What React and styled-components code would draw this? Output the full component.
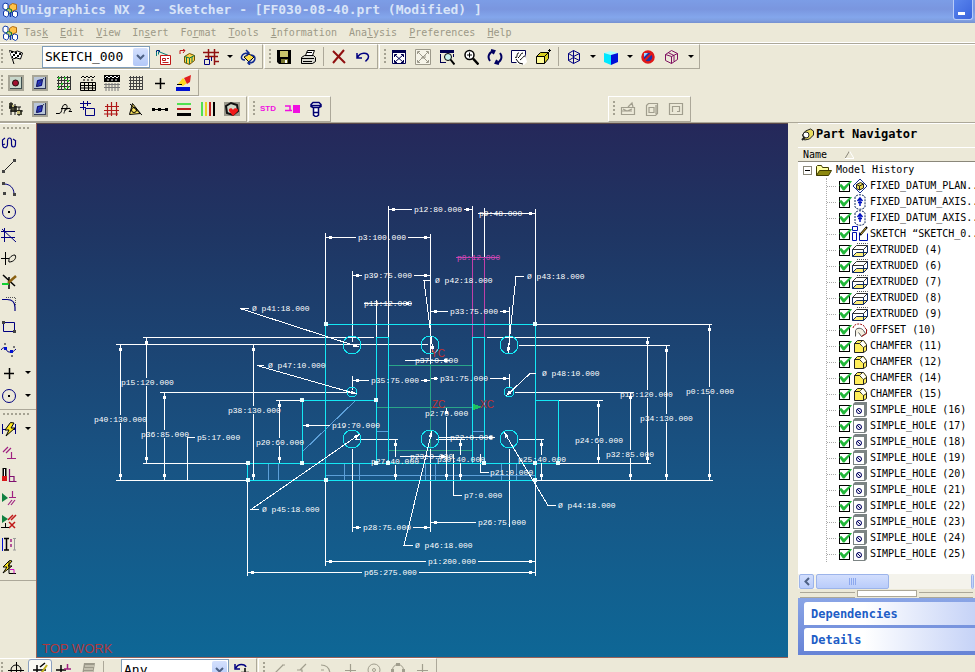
import { Fragment } from "react";
import styled, { createGlobalStyle, css } from "styled-components";

const GlobalStyle = createGlobalStyle`
  :root {
    --face: #ece9d8;
    --shadow: #aca899;
    --light: #ffffff;
    --font-ui: "DejaVu Sans Mono", "Liberation Mono", monospace;
  }

  * {
    box-sizing: border-box;
  }

  body {
    margin: 0;
    overflow: hidden;
    background: var(--face);
    font-family: var(--font-ui);
    font-size: 10px;
    color: #000;
  }
`;

/* ---------- icons, all on a 16 x 16 grid ---------- */

const stroke = (d, color = "#000", width = 1, fill = "none") => (
  <path d={d} stroke={color} strokeWidth={width} fill={fill} />
);

const fill = (d, color = "#000") => <path d={d} fill={color} />;

const grid = (color) =>
  stroke(
    "M2.5 1v14M5.5 1v14M8.5 1v14M11.5 1v14M14.5 1v14M1 2.5h14M1 5.5h14M1 8.5h14M1 11.5h14M1 14.5h14",
    color
  );

const art = {
  app: (
    <>
      {stroke("M1 2.500l2-1.500 3 1v4l-2 2-3-1.500z", "#123aa8", 1, "#fff")}
      {stroke("M7.500 3.500l3-2 4 1v5l-4 1.500-3-2z", "#b06a10", 1, "#ffc24a")}
      {stroke("M4.500 7.500l2-1 3 1v3l-2 1-3-1z", "#0b7a2e", 1, "#b8c86c")}
      {stroke("M10.500 10l2-1 3 1v4l-2 1.500-3-1.500z", "#123aa8", 1, "#fff")}
      {stroke("M1.500 9.500l2-1 3 1v4l-2 1.500-3-1.500z", "#123aa8", 1, "#fff")}
      {stroke("M8.500 10v5", "#123aa8", 1.500)}
    </>
  ),
  flag: (
    <>
      {stroke("M1.500 1.500L6 15", "#000")}
      {stroke("M1.500 1.500l5 1.500 3-1 5 2-2 6-4-1-4 1", "#000", 1, "#fff")}
      {fill("M3 2h2v2H3zM7 3h2v2H7zM11 4h2v2h-2zM5 5h2v2H5zM9 6h2v2H9zM4 7h1v2H4zM7 8h2v1H7z")}
    </>
  ),
  sketchView: (
    <>
      {stroke("M1.500 7V1.500H5M3.500 5.500V2.500l10 4", "#0a7a7a")}
      {stroke("M5.500 6.500h10v9h-10z", "#c01818", 1, "#fff")}
      {stroke("M7.500 9.500h3v2h-3zM12 9.500h2M7.500 13.500h6", "#c01818")}
      {stroke("M1 3l2-2 2 2", "#000080")}
    </>
  ),
  orient: (
    <>
      {stroke("M1 5V1.500h5M4 0l2 1.500L4 4", "#c01818")}
      {stroke("M5.500 7.500l5-3 5 2v5l-5 4-5-2z", "#705000", 1, "#ffd24a")}
      {stroke("M5.500 7.500l5 1.500 5-2.500M10.500 9v6M7.500 8v6M13 8v5", "#0a7a4a")}
    </>
  ),
  reattach: (
    <>
      {stroke("M0 3.500h16M5.500 0v10M11.500 0v16M2 7.500h13M12 12.500h4", "#901010", 1.500)}
      {stroke("M1.500 10.500h5v5h-5zM8.500 8v4", "#000080")}
    </>
  ),
  update: (
    <>
      {stroke("M4 8l5-3 5 3-5 5z", "#000", 1, "#ffe04a")}
      {stroke("M5 11C-1 11 1 4 8 4M6 1l3 3-3 3M11 6c6 0 5 8-2 8M11 11l-3 3 2 2", "#102a90", 1.500)}
    </>
  ),
  save: (
    <>
      {fill("M1 1h14v14H3l-2-2z")}
      {fill("M4 2h8v6H4z", "#c9c46a")}
      {fill("M5 10h7v4H5z", "#7c7a34")}
      {fill("M9 11h2v3H9z", "#fff")}
    </>
  ),
  print: (
    <>
      {stroke("M5.500 6.500l2-5h7l-2 5", "#000", 1, "#fff")}
      {stroke("M1.500 8.500l3-2h9l2 2v4l-3 2h-11z", "#000", 1, "#d8d8d0")}
      {stroke("M2 9.500h12M3 12.500h9M7 3.500h5", "#000")}
    </>
  ),
  remove: stroke("M2 2l12 12M13 1L2 14", "#901010", 2),
  undo: stroke("M2 4v5h5M2.500 8.500C5 3 13 3 13.500 7.500c0 3-2 3-3 5", "#000080", 1.500),
  fit: (
    <>
      {stroke("M1.500 2.500h13v12h-13z", "#000050", 1, "#fff")}
      {fill("M1 1h14v3H1z", "#000050")}
      {stroke("M4 6l8 7M12 6l-8 7M3.500 8V5.500H6M10 5.500h2.500V8M3.500 11v2.500H6M10 13.500h2.500V11", "#000050")}
    </>
  ),
  fitSelection: (
    <>
      {stroke("M.500 .500h15v15H.500z", "#9c998a", 1, "#f6f4e8")}
      {stroke("M3 3l10 10M13 3L3 13M2.500 5V2.500H5M11 2.500h2.500V5M2.500 11v2.500H5M11 13.500h2.500V11M6 9h4V6", "#9c998a")}
    </>
  ),
  zoomArea: (
    <>
      {fill("M1 1h14v3H1z", "#000050")}
      {stroke("M1.500 5v8M14.500 5v3M1 13.500h6", "#000050", 1)}
      <circle cx="9" cy="8" r="3.500" fill="#c9f2ee" stroke="#000" />
      {stroke("M11.500 10.500l4 5", "#000", 2)}
    </>
  ),
  zoom: (
    <>
      <circle cx="6.500" cy="6" r="4.500" fill="#fff" stroke="#000" strokeWidth="1.500" />
      {stroke("M4 6h5M6.500 3.500v5", "#000")}
      {stroke("M10 9.500l5.500 6", "#000", 2.500)}
    </>
  ),
  rotate: stroke("M3 12C0 8 2 3 7 2M4 1l3.500 1L6 5M13 4c3 4 1 9-4 10M12 15l-3.500-1L10 11", "#000060", 2),
  pan: (
    <>
      {stroke("M.500 1.500h14v12H.500z", "#000050", 1, "#fff")}
      {fill("M6 15L4 9l3 2 7-6 2 8-3 3z", "#fff")}
      {stroke("M4 8c3 3 1-5 4-4M7 9c3-2 2-5 5-5M9 11c3-2 3-4 5-4M5 10l3 4 4 1", "#000")}
    </>
  ),
  perspective: (
    <>
      {stroke("M1.500 7.500l4-4h8l-4 4zM9.500 7.500l4-4v6l-4 5z", "#000", 1, "#d8d020")}
      {stroke("M1.500 7.500h8v7h-8z", "#000", 1, "#fffb96")}
      {stroke("M13 1.500h3M14.500 0v3")}
    </>
  ),
  wire: stroke("M2.500 4.500l5-3 6 3v7l-6 3-5-3zM2.500 4.500l5 3 6-3M7.500 1.500v13M2.500 11.500l5-3 6 3", "#000080"),
  shaded: (
    <>
      {fill("M1 4l6-2 8 2-6 2z", "#a8ffff")}
      {fill("M1 4l7 2v10l-7-3z", "#00e8ff")}
      {fill("M8 6l7-2v9l-7 3z", "#0010d8")}
    </>
  ),
  noHide: (
    <>
      <circle cx="8" cy="8" r="5.500" fill="#2030a8" stroke="#e01818" strokeWidth="2.500" />
      {fill("M4 4h4L4 8z", "#9ad6ff")}
      {stroke("M4 12l8-8", "#e01818", 2)}
    </>
  ),
  wirePurple: stroke("M1.500 5.500l6-4 6 3v6l-6 4-6-3zM1.500 5.500l6 2 6-3M7.500 7.500v7M4 3.500l6 3v6", "#801060"),
  constraintA: (
    <>
      {fill("M0 0h16v16H0z", "#a7a596")}
      {fill("M2 2h11v11H2z", "#c9d8cc")}
      <circle cx="7.500" cy="8" r="3" fill="#a01030" stroke="#201010" />
      {stroke("M13.500 2v12M2 13.500h12", "#405050")}
    </>
  ),
  constraintB: (
    <>
      {fill("M0 0h16v16H0z", "#a7a596")}
      {fill("M2 2h11v11H2z", "#b9c6d8")}
      {stroke("M4.500 11.500l1-6 5-1-1 6z", "#000070", 1, "#2838c8")}
      {stroke("M4 12l8-9M13.500 2v12M2 13.500h12", "#303858")}
    </>
  ),
  gridGreen: (
    <>
      {grid("#333")}
      {fill("M2 2h2v2H2zM8 2h2v2H8zM11 5h2v2h-2zM5 8h2v2H5zM2 11h2v2H2zM11 11h2v2h-2zM8 13h2v2H8z", "#28b428")}
    </>
  ),
  pointsTable: (
    <>
      {stroke("M1 3l2-2 2 2 2-2 2 2 2-2 2 2 2-2M3 5h2M7 5h2M11 5h2", "#000", 1)}
      {stroke("M.500 7.500h15v8H.500zM0 10.500h16M0 13h16M4.500 7v9M8.500 7v9M12.500 7v9", "#000")}
    </>
  ),
  pointsDark: (
    <>
      {fill("M0 0h16v7H0z")}
      {stroke("M1 3l2-2 2 2 2-2 2 2 2-2 2 2 2-2M3 5h2M7 5h2M11 5h2", "#fff")}
      {stroke("M2 8v8M5 8v8M8 8v8M11 8v8M14 8v8M0 9.500h16M0 12.500h16", "#777")}
    </>
  ),
  grid: grid("#444"),
  plus: stroke("M3 8.500h10M8.500 3v11", "#000", 1.500),
  brush: (
    <>
      {fill("M0 12h14v4H0z", "#0010d0")}
      {fill("M2 9l5-6 4 5-4 3z", "#ffd820")}
      {fill("M8 3l7-3-1 7-3 2z", "#e02020")}
      {stroke("M1 9.500h5", "#000")}
    </>
  ),
  gears: (
    <>
      {fill("M1 2h4v3h4v4h5v5H9v-3H3V8H1z", "#4a4a38")}
      {stroke("M3 1v13M7 3v11M11 6v9M1 6h12M2 10h13", "#111")}
      {fill("M9 10h3v3H9zM4 4h2v2H4z", "#c0b878")}
    </>
  ),
  profile: stroke("M0 12.500h3c4 0 2-9 6-9 3 0 3 4-1 6M5 7.500h9M8 12.500c0-3 4-6 6-5 1 1 0 2-1 3h3"),
  rectGrid: stroke("M3.500 0v9M7.500 0v5M0 2.500h11M0 6.500h6M5.500 7.500h9v7h-9z", "#000080"),
  redGrid: stroke("M3.500 3v13M7.500 1v14M12.500 1v14M1 5.500h14M0 9.500h15M0 13h14", "#b01818", 1.200),
  cone: (
    <>
      {stroke("M1.500 13.500l3-11 8 10zM2 3l12 11", "#000", 1, "#ffe860")}
      <circle cx="6" cy="9" r="2.500" fill="none" stroke="#000" />
    </>
  ),
  dotted: (
    <>
      {stroke("M0 8.500h16")}
      {fill("M0 7h3v3H0zM6 7h3v3H6zM13 7h3v3h-3z")}
    </>
  ),
  hBars: (
    <>
      {fill("M1 2h14v2H1z", "#50e050")}
      {fill("M1 7h14v2H1z", "#c02020")}
      {fill("M1 12h14v3H1z", "#000")}
    </>
  ),
  vBars: (
    <>
      {fill("M1 1h2v14H1z", "#50e050")}
      {fill("M5 1h2v14H5z", "#e8d020")}
      {fill("M9 1h2v14H9z", "#c02020")}
      {fill("M13 1h2v14h-2z", "#000")}
    </>
  ),
  heart: (
    <>
      {fill("M0 1h16v14H0z", "#9c9a8c")}
      {stroke("M2 5l5-3 6 2 1 6-5 4-6-2z", "#111", 2, "#cfd8c8")}
      {fill("M9 15L5 10c-1-3 3-4 4-1 1-3 6-2 5 1z", "#f01818")}
    </>
  ),
  magentaBox: (
    <>
      {stroke("M1 5h5v4M1 9.500h7", "#f010e0", 1.500)}
      {fill("M9 4h7v8H9z", "#f010e0")}
    </>
  ),
  bolt: stroke("M5 1.500h6l2 2v2l-2 1H5l-2-1v-2zM3 4.500h10M5.500 7v7l2 1.500h1l2-1.500V7M5 11.500h6", "#000070", 1.500, "#fff"),
  openGray: stroke("M1.500 6.500h13v7h-13zM2 10h10M8 6l4-4 1 4M3 8l4 2 5-2", "#a19e8e", 1.200),
  boxGray: stroke("M2.500 4.500l2-2h9v10l-2 2h-9zM5 6.500h5v5H5zM12 4v9", "#a19e8e", 1.200),
  frameGray: stroke("M1.500 2.500h13v11h-13zM4.500 11V5.500h7v5H9", "#a19e8e", 1.200),
  sCurve: stroke("M4 3L1.500 5v4c0 5 5 5 5 0V6c0-4 4-4 4 0v3c0 4 4 4 4 0V6M4 9l-2.500 1M12 4l3 2", "#000080", 1.200),
  line: (
    <>
      {stroke("M3 13L13 3", "#222")}
      {fill("M1 12h3v3H1zM12 1h3v3h-3z", "#444")}
    </>
  ),
  arc: (
    <>
      {stroke("M3 3c6 0 10 4 10 10", "#000080")}
      {fill("M1 1h3v3H1zM12 12h3v3h-3zM2 11h3v3H2z", "#444")}
    </>
  ),
  circle: (
    <>
      <circle cx="8" cy="8" r="6.500" fill="none" stroke="#000080" />
      {fill("M7 7h2v2H7z")}
    </>
  ),
  trim: stroke("M3.500 1v14M0 4.500h14M0 10.500h14M1 2l14 13", "#000080"),
  extend: stroke("M4.500 2v13M0 8.500h8M8 12c-1-3 2-7 6-7 2 3-1 7-6 7z"),
  corner: (
    <>
      {stroke("M2 2l12 11M8 4v12", "#000", 1.500)}
      {stroke("M1 11h7", "#10d030", 2)}
      {stroke("M7 10l8-7", "#8a6010", 2.500)}
    </>
  ),
  fillet: (
    <>
      {stroke("M1 3.500h5c5 0 8 3 8 8V15", "#000080", 1.200)}
      <path d="M5 1.500h9.500V9" fill="none" stroke="#555" strokeDasharray="1 1" />
    </>
  ),
  rect: (
    <>
      {stroke("M2.500 3.500h11v9h-11z", "#000080")}
      {fill("M1 2h3v3H1zM12 11h3v3h-3z", "#444")}
    </>
  ),
  spline: (
    <>
      {stroke("M0 8c4-6 5 2 8 2s3 1 7-3", "#000080")}
      {fill("M3 5h3v3H3zM9 8h3v3H9z", "#0010d0")}
      {fill("M3 1h2v2H3zM12 4h2v2h-2zM10 13h2v2h-2z", "#777")}
    </>
  ),
  flashDim: (
    <>
      {stroke("M1.500 3v10M14.500 3v10M1 8.500h14", "#000080")}
      {stroke("M9.500 1.500L4 9h4l-3 6 9-8h-4l3-5z", "#000", 1, "#ffe820")}
    </>
  ),
  parallel: stroke("M2 8l5-5M5 9l5-5M6 14.500h9M10.500 8v6", "#a02080", 1.200),
  temp: (
    <>
      {stroke("M3.500 1v9", "#000", 4)}
      {stroke("M3.500 2v7", "#fff", 1)}
      {fill("M1 9h5v5H1z", "#d81818")}
      {stroke("M8.500 2v12.500h7M9 9.500h4v5", "#801070", 1.200)}
    </>
  ),
  playDim: (
    <>
      {fill("M1 3l6 5-6 4z", "#108040")}
      {stroke("M7 15l4-5M10 15l4-5M8 7.500h7M11.500 1v6", "#a02080", 1.200)}
    </>
  ),
  playRed: (
    <>
      {fill("M1 2l6 4-6 4z", "#108040")}
      {stroke("M7 7l5-5M10 7l5-5M8 9l6 6M14 9l-6 6", "#c01818", 1.500)}
      {stroke("M0 14.500h8M4.500 10v4")}
    </>
  ),
  mirror: (
    <>
      {stroke("M1.500 2v13", "#0010d0")}
      {stroke("M3 2.500h5M3 14h5M5.500 2v12", "#000", 1.500)}
      {stroke("M10 3v3M10 8v3", "#a02080", 1.500)}
      {stroke("M12 2.500h3M12 14h3M13.500 2v12", "#999")}
    </>
  ),
  flashCorner: (
    <>
      {stroke("M8.500 1.500L2 8h4l-4 6 9-7H7l4-5z", "#000", 1, "#ffe820")}
      {stroke("M8 2v12.500h7", "#000")}
      {stroke("M9 10.500h4v4", "#d010c0")}
    </>
  ),
  target: (
    <>
      <circle cx="8" cy="8" r="5" fill="none" stroke="#000" />
      {stroke("M8.500 0v16M0 8.500h16")}
    </>
  ),
  snap: (
    <>
      {stroke("M1 8h13M5 3v12M8 5l5-4", "#000", 1.500)}
      {stroke("M8 13l7-10", "#c0b020", 2)}
    </>
  ),
  snapPink: (
    <>
      {stroke("M0 8h10M5 3v12", "#000", 1.500)}
      {stroke("M8 7h7M11.500 2v5", "#a02080", 1.500)}
    </>
  ),
  stack: (
    <>
      {fill("M4 1h11l-2 12H2z", "#9c998a")}
      {stroke("M5 4h9M4 7h9M4 10h9", "#e8e4d2")}
    </>
  ),
  grayLine: stroke("M3 13L13 3M2 13h3M12 3h3", "#a19e8e", 1.200),
  grayTee: stroke("M12 2L6 8M3 8h5v6", "#a19e8e", 1.200),
  grayArc: stroke("M3 3c6 0 9 4 9 10M3 8h3", "#a19e8e", 1.200),
  grayPlus: stroke("M8.500 2v12M3 8.500h11", "#a19e8e", 1.200),
  grayCircle: (
    <g fill="none" stroke="#a19e8e">
      <circle cx="8" cy="8" r="6" />
      <circle cx="8" cy="8" r="1.500" />
    </g>
  ),
  grayRing: (
    <>
      <circle cx="8" cy="8" r="5.500" fill="none" stroke="#a19e8e" />
      {fill("M6 1h4v3H6zM1 7h3v3H1zM12 7h3v3h-3z", "#a19e8e")}
    </>
  ),
  undoDark: (
    <>
      {stroke("M1 2v5h5M2 6c2-5 9-4 10-1", "#000080", 1.500)}
      {stroke("M11 6v9M7 10.500h8", "#000", 1.500)}
    </>
  ),
  navigator: (
    <>
      {stroke("M2.500 9l3-4 5-2 3 2v4l-4 4-5 1z", "#222", 1, "#e8dc60")}
      <circle cx="6" cy="9" r="3" fill="#fff" stroke="#222" />
      {stroke("M2 14l3-3", "#222", 2)}
    </>
  ),
  folder: (
    <>
      {stroke("M.500 13.500v-9l1-1h4l1 2h6v3", "#403c00", 1, "#ffffa0")}
      {stroke("M.500 13.500l3-5h12l-3 5z", "#403c00", 1, "#8c8810")}
    </>
  ),
  plane: (
    <>
      {stroke("M1 8l7-7 7 7-7 7z", "#102a90", 1, "#fff")}
      {stroke("M4.500 6.500l4-2 3 1.500v4l-4 2-3-1.500z", "#222", 1, "#e8d850")}
      {stroke("M4.500 6.500l3 1.500 4-2M7.500 8v4", "#222")}
    </>
  ),
  axis: (
    <>
      <path d="M3 3v10c2 3 8 3 10 0V3C11 0 5 0 3 3z" fill="#fff" stroke="#102a60" strokeDasharray="2 1" />
      {stroke("M8 4v8M5.500 7L8 4l2.500 3M6 8.500h4", "#0010c0", 1.500)}
    </>
  ),
  sketch: (
    <>
      {stroke("M.500 .500h5v4h-5zM.500 6.500h4v8h-4zM7.500 6.500v8h8v-7", "#0010b0", 1, "#fff")}
      {stroke("M8 9l7-8", "#000", 2)}
      {stroke("M9 8l5-6", "#d8b030", 1)}
    </>
  ),
  extruded: (
    <>
      {stroke("M.500 7.500l4-4h11l-4 4z", "#333", 1, "#fff")}
      <path d="M5 1.500h10.500v6" fill="none" stroke="#555" strokeDasharray="1 1" />
      {stroke("M.500 14.500l4-4h11l-4 4z", "#102a60", 1, "#fff07a")}
      {stroke("M.500 7.500v7M11.500 7.500v7M15.500 3.500v7", "#102a60")}
    </>
  ),
  offset: (
    <>
      <path d="M1 6C2 1 9 1 12 4l3 5" fill="none" stroke="#a01818" strokeDasharray="2 1" />
      {stroke("M3.500 14.500v-6c1-3 6-3 8 0l2 3-4 3-3-4", "#555", 1, "#f4f0e0")}
      {stroke("M9.500 14.500l5-3V7", "#a01818")}
    </>
  ),
  chamfer: (
    <>
      {stroke("M2.500 14.500v-9l3-3h6l3 4v6l-3 2z", "#222", 1, "#ffee5a")}
      {stroke("M2.500 5.500h5l4 4v5M7.500 5.500l3-3M11.500 9.500l3-2", "#222", 1)}
      {fill("M8 5l3-2 3 4-3 2z", "#fff")}
    </>
  ),
  hole: (
    <>
      {fill("M1 2l2-2h12v13l-2 2H1z", "#7c8484")}
      {fill("M2 3h10v11H2z", "#fff")}
      <circle cx="7" cy="9" r="2.500" fill="#fff" stroke="#000060" />
      {stroke("M5 7l4 4", "#000060")}
    </>
  ),
};

const IconSvg = styled.svg`
  display: block;
  flex: none;
  width: 16px;
  height: 16px;
`;

function Icon({ name }) {
  return (
    <IconSvg viewBox="0 0 16 16" aria-hidden="true">
      {art[name]}
    </IconSvg>
  );
}

/* ---------- frame ---------- */

const Window = styled.div`
  display: flex;
  flex-direction: column;
  height: 100vh;
  background: var(--face);
`;

const TitleBar = styled.header`
  display: flex;
  flex: none;
  align-items: center;
  gap: 2px;
  height: 23px;
  padding: 0 2px 4px;
  background: linear-gradient(#7c9de6, #7a96df 40%, #83a6ec 75%, #7f9ee0 90%, #7590d0);
`;

const Title = styled.h1`
  flex: 1;
  margin: 0;
  font-size: 13px;
  font-weight: bold;
  line-height: 18px;
  white-space: pre;
  color: #d8e4f8;
`;

const MinimizeButton = styled.button`
  align-self: flex-start;
  display: flex;
  align-items: flex-end;
  width: 20px;
  height: 20px;
  padding: 0 0 4px 4px;
  border: 1px solid #b8ccf8;
  border-top: 0;
  border-radius: 0 0 3px 3px;
  background: linear-gradient(135deg, #5a86ee, #3a63dc);

  &::after {
    content: "";
    width: 7px;
    height: 3px;
    background: #fff;
  }
`;

const MenuBar = styled.nav`
  display: flex;
  flex: none;
  align-items: center;
  height: 21px;
  padding-left: 2px;
  border-bottom: 1px solid var(--shadow);
  box-shadow: 0 1px 0 var(--light), inset 0 -1px 0 var(--light);
`;

const MenuItem = styled.button`
  padding: 0 6px;
  border: 0;
  background: none;
  font: 10px/18px var(--font-ui);
  color: #9c9987;
`;

const menus = [
  ["Tas", "k", ""],
  ["", "E", "dit"],
  ["", "V", "iew"],
  ["In", "s", "ert"],
  ["Fo", "r", "mat"],
  ["", "T", "ools"],
  ["", "I", "nformation"],
  ["Ana", "l", "ysis"],
  ["", "P", "references"],
  ["", "H", "elp"],
];

/* ---------- toolbars ---------- */

const Toolbars = styled.div`
  flex: none;
  border-bottom: 1px solid var(--shadow);
`;

const ToolbarRow = styled.div`
  display: flex;
`;

const Toolbar = styled.div`
  display: flex;
  align-items: center;
  height: ${(p) => p.$height || 26}px;
  padding-right: 2px;
  padding-left: ${(p) => (p.$offset ? 3 : 0)}px;
  margin-left: ${(p) => p.$offset || 0}px;
  border-top: 1px solid var(--light);
  border-right: 1px solid var(--shadow);
  border-bottom: 1px solid var(--shadow);
  border-left: ${(p) => (p.$offset ? "1px solid var(--light)" : "0")};
`;

const Grip = styled.span`
  flex: none;
  width: 2px;
  height: 16px;
  margin: 0 1px;
  background: repeating-linear-gradient(#a5a292 0 2px, transparent 2px 4px);
`;

const toolButton = css`
  display: flex;
  align-items: center;
  justify-content: center;
  flex: none;
  padding: 0;
  border: 0;
  background: none;
`;

const ToolButton = styled.button`
  ${toolButton}
  width: 24px;
  height: 22px;

  &[aria-pressed="true"] {
    border: 1px solid #8aa0c0;
    border-radius: 3px;
    background: #fbfaf4;
  }
`;

const CaretButton = styled.button`
  ${toolButton}
  width: 13px;
  height: 22px;

  &::after {
    content: "";
    border: 3px solid transparent;
    border-top-color: #000;
    border-bottom: 0;
  }
`;

const Separator = styled.span`
  width: 1px;
  height: 19px;
  margin: 0 3px;
  background: var(--shadow);
`;

const StdLabel = styled.span`
  font: bold 8px/16px "Liberation Sans", sans-serif;
  color: #f010e0;
`;

const SelectBox = styled.div`
  position: relative;
  width: 108px;
  height: 22px;
  margin: 0 1px 0 14px;
`;

const Select = styled.select`
  appearance: none;
  width: 100%;
  height: 100%;
  padding: 0 20px 0 2px;
  border: 1px solid #7f9db9;
  border-radius: 0;
  background: #fff;
  font: 13px/18px var(--font-ui);
  color: #000;
`;

const SelectArrow = styled.span`
  position: absolute;
  top: 2px;
  right: 2px;
  bottom: 2px;
  display: flex;
  align-items: center;
  justify-content: center;
  width: 15px;
  border-radius: 2px;
  background: linear-gradient(#d4e0fd, #b2c8f8);
  pointer-events: none;
`;

function Combo({ label, value }) {
  return (
    <SelectBox>
      <Select aria-label={label} defaultValue={value}>
        <option>{value}</option>
      </Select>
      <SelectArrow>
        <svg width="9" height="6" viewBox="0 0 9 6" aria-hidden="true">
          {stroke("M1 1l3.500 3.500L8 1", "#4d6185", 2)}
        </svg>
      </SelectArrow>
    </SelectBox>
  );
}

function Tools({ names, pressed }) {
  return names.map((name, idx) => {
    if (name === "|") return <Separator key={idx} />;
    if (name === "v") return <CaretButton key={idx} aria-label="More options" />;
    return (
      <ToolButton key={idx} aria-label={name} aria-pressed={name === pressed}>
        <Icon name={name} />
      </ToolButton>
    );
  });
}

/* ---------- left palette ---------- */

const Workspace = styled.main`
  display: flex;
  flex: 1;
  min-height: 0;
`;

const Palette = styled.aside`
  flex: none;
  width: 36px;
  border-top: 1px solid var(--light);
`;

const PaletteGroup = styled.div`
  padding: 3px 0 2px;
  border-bottom: 1px solid var(--shadow);

  &::before {
    content: "";
    display: block;
    width: 27px;
    height: 2px;
    margin: 0 0 2px 3px;
    background: repeating-linear-gradient(90deg, #a5a292 0 2px, transparent 2px 4px);
  }
`;

const PaletteRow = styled.div`
  display: flex;
  align-items: center;
  height: 23px;
  padding-left: 1px;
`;

const PaletteButton = styled.button`
  ${toolButton}
  width: 16px;
  height: 22px;
  margin-right: 4px;
`;

const drawTools = [
  ["sCurve"],
  ["line"],
  ["arc"],
  ["circle"],
  ["trim"],
  ["extend"],
  ["corner"],
  ["fillet"],
  ["rect"],
  ["spline"],
  ["plus", true],
  ["circle", true],
];

const dimensionTools = [
  ["flashDim", true],
  ["parallel"],
  ["temp"],
  ["playDim"],
  ["playRed"],
  ["mirror"],
  ["flashCorner"],
];

function PaletteTools({ tools }) {
  return (
    <PaletteGroup>
      {tools.map(([name, more], idx) => (
        <PaletteRow key={idx}>
          <PaletteButton aria-label={name}>
            <Icon name={name} />
          </PaletteButton>
          {more && <CaretButton aria-label="More options" />}
        </PaletteRow>
      ))}
    </PaletteGroup>
  );
}

/* ---------- drawing ---------- */

const Viewport = styled.section`
  flex: 1;
  min-width: 0;
  border: 1px solid #9a6258;
  border-top-color: #5a4848;
  border-right: 0;
  background: linear-gradient(#25285a 0, #1f3563 20%, #185484 65%, #0e6796 100%);
`;

const Drawing = styled.svg`
  display: block;
  width: 100%;
  height: 100%;
  fill: none;
  shape-rendering: crispEdges;
`;

const DimText = styled.text`
  font: 8px "Liberation Mono", monospace;
  fill: ${(p) => p.$color || "#fff"};
  stroke: none;
  white-space: pre;
`;

const AxisText = styled.text`
  font: 10px "Liberation Sans", sans-serif;
  fill: #c03030;
`;

const ViewName = styled.text`
  font: 13px "Liberation Sans", sans-serif;
  fill: #b0383c;
`;

// horizontal dimensions: from, to, y, label, label x
const across = [
  [388, 472, 209, "p12:80.000", 414],
  [325, 430, 237, "p3:100.000", 358],
  [352, 430, 275, "p39:75.000", 364],
  [430, 509, 311, "p33:75.000", 450],
  [352, 430, 380, "p35:75.000", 371],
  [430, 509, 378, "p31:75.000", 440],
  [352, 430, 527, "p28:75.000", 363],
  [430, 509, 522, "p26:75.000", 478],
  [325, 535, 561, "p1:200.000", 428],
  [247, 535, 572, "p65:275.000", 364],
  [302, 376, 425, "p19:70.000", 332],
];

// vertical dimensions: x, from, to, label, label x, label y
const upright = [
  [146, 337, 463, "p15:120.000", 121, 382],
  [120, 344, 480, "p40:130.000", 94, 419],
  [164, 392, 480, "p36:85.000", 141, 434],
  [253, 344, 480, "p38:130.000", 228, 410],
  [279, 400, 463, "p20:60.000", 256, 442],
  [598, 400, 463, "p24:60.000", 575, 440],
  [630, 392, 480, "p32:85.000", 606, 454],
  [647, 337, 463, "p16:120.000", 620, 394],
  [666, 345, 480, "p34:130.000", 640, 418],
  [709, 324, 480, "p0:150.000", 686, 391],
  [446, 407, 480, "p2:70.000", 425, 413],
  [395, 439, 480, "p27:40.000", 371, 461],
  [460, 439, 480, "p30:40.000", 437, 459],
  [541, 439, 480, "p25:40.000", 518, 459],
];

// struck-through dimensions: line from, line to, y, label, label x
const struck = [
  [478, 535, 213, "p9:48.000", 479],
  [364, 412, 303, "p13:12.000", 364],
  [405, 450, 360, "p37:0.000", 415],
  [439, 495, 437, "p22:0.000", 450],
  [400, 447, 456, "p23:0.000", 410],
];

const notes = [
  ["\u00d8 p41:18.000", 252, 308],
  ["\u00d8 p42:18.000", 435, 280],
  ["\u00d8 p43:18.000", 527, 276],
  ["\u00d8 p47:10.000", 268, 365],
  ["\u00d8 p48:10.000", 542, 373],
  ["\u00d8 p45:18.000", 262, 509],
  ["\u00d8 p46:18.000", 415, 545],
  ["\u00d8 p44:18.000", 558, 505],
  ["p5:17.000", 197, 437],
  ["p7:0.000", 464, 495],
  ["p21:0.000", 490, 472],
];

const leaders = [
  "M249 308.500h-9L359 347",
  "M430 280.500h-6L433 352",
  "M524 276.500h-8L508 353",
  "M264 365.500h-7L357 394",
  "M536 373.500h-6L506 396",
  "M259 509.500h-8L360 434",
  "M413 545.500h-9L432 431",
  "M556 505.500h-8L504 432",
];

const extensions =
  "M388.500 206v131M472.500 206v51M484.500 208v49M535.500 209v115M325.500 233v91M430.500 234v130" +
  "M352.500 271v71M376.500 300v37M509.500 307v38M352.500 376v14M509.500 374v14" +
  "M143 337.500h231M487 337.500h163M116 344.500h312M519 345.500h151M535 324.500h177" +
  "M160 392.500h190M515 392.500h119M143 463.500h105M116 480.500h132M276 400.500h26" +
  "M558 400.500h45M558 463.500h93M535 480.500h178M355 439.500h43M436 439.500h29M519 439.500h25" +
  "M247.500 480v96M325.500 480v86M535.500 480v96M352.500 449v83M430.500 449v83M509.500 449v78" +
  "M195 437.500h-8v43M462 495.500h-9v-42M489 472.500h-9v-19";

const circles = [
  [352, 345, 9],
  [430, 345, 9],
  [509, 345, 9],
  [352, 439, 9],
  [430, 439, 9],
  [509, 439, 9],
  [352, 392, 5],
  [509, 392, 5],
];

const vertices = [
  [326, 324],
  [535, 324],
  [302, 400],
  [376, 400],
  [248, 463],
  [302, 463],
  [376, 463],
  [388, 463],
  [484, 463],
  [535, 463],
  [558, 463],
  [248, 480],
  [326, 480],
  [535, 480],
];

const CHAR = 5;

function DimAcross({ dim: [from, to, y, label, x] }) {
  const end = x + label.length * CHAR;
  return (
    <>
      <path d={`M${x - 2} ${y + 0.5}H${from + 1}`} markerEnd="url(#arrow)" />
      {end < to && <path d={`M${end} ${y + 0.5}H${to}`} markerEnd="url(#arrow)" />}
      <DimText x={x} y={y + 3}>
        {label}
      </DimText>
    </>
  );
}

function DimUpright({ dim: [at, from, to, label, x, y] }) {
  return (
    <>
      <path d={`M${at + 0.5} ${y - 4}V${from + 1}`} markerEnd="url(#arrow)" />
      <path d={`M${at + 0.5} ${y + 4}V${to}`} markerEnd="url(#arrow)" />
      <DimText x={x} y={y + 3}>
        {label}
      </DimText>
    </>
  );
}

function Sketch() {
  return (
    <Drawing role="img" aria-label="Sketch with dimensions">
      <defs>
        <marker id="arrow" markerUnits="userSpaceOnUse" markerWidth="7" markerHeight="5" refX="6" refY="2.500" orient="auto">
          <path d="M0 .500L6 2.500 0 4.500z" fill="#fff" />
        </marker>
      </defs>
      <g transform="translate(-37 -124)">
        <path
          stroke="#5c9fd8"
          d="M302 452l53-51M376 431.500h12M473 431.500h12M268.500 463v17M278.500 463v17M344.500 463v17M359.500 463v17M425.500 463v17M435.500 463v17M501.500 463v17M516.500 463v17M325 475.500h210"
        />
        <path stroke="#2aa588" d="M388 365.500h85M376 407.500h97M388 450.500h85M430.500 352v98" />
        <path stroke="#fff" d={extensions} />
        <path stroke="#c040a8" d="M472.500 257v80M484.500 257v80M456 257.500h43" />
        <g stroke="#14e8f4">
          <path d="M325.500 480V324.500h210V480.500H247.500V463.500h311V400.500h-23M302.500 463V400.500h74M376.500 463V337.500h12V463M472.500 463V337.500h12V463" />
          {circles.map(([cx, cy, r]) => (
            <circle key={`${cx}-${cy}`} cx={cx} cy={cy} r={r} />
          ))}
        </g>
        <g stroke="#fff">
          {leaders.map((d) => (
            <path key={d} d={d} markerEnd="url(#arrow)" />
          ))}
          {across.map((dim) => (
            <DimAcross key={dim[3]} dim={dim} />
          ))}
          {upright.map((dim) => (
            <DimUpright key={dim[3]} dim={dim} />
          ))}
          {struck.map(([from, to, y, label, x]) => (
            <Fragment key={label}>
              <path d={`M${from} ${y + 0.5}H${to}`} markerEnd="url(#arrow)" />
              <DimText x={x} y={y + 3}>
                {label}
              </DimText>
            </Fragment>
          ))}
        </g>
        {notes.map(([label, x, y]) => (
          <DimText key={label} x={x} y={y + 3}>
            {label}
          </DimText>
        ))}
        <DimText $color="#d84cbc" x="457" y="260">
          p8:12.000
        </DimText>
        {vertices.map(([x, y]) => (
          <path key={`${x}-${y}`} fill="#e8ffff" d={`M${x - 2} ${y - 2}h4v4h-4z`} />
        ))}
        <path fill="#20c060" d="M473 404l9 3-9 3z" />
        <AxisText x="431" y="357">YC</AxisText>
        <AxisText x="432" y="408">ZC</AxisText>
        <AxisText x="480" y="408">XC</AxisText>
        <ViewName x="42" y="653">TOP WORK</ViewName>
      </g>
    </Drawing>
  );
}

/* ---------- part navigator ---------- */

const Navigator = styled.aside`
  display: flex;
  flex-direction: column;
  flex: none;
  width: 177px;
  margin: 0 0 3px 10px;
  overflow: hidden;
`;

const NavigatorTitle = styled.h2`
  display: flex;
  flex: none;
  align-items: center;
  height: 24px;
  margin: 0;
  padding: 0 0 4px 2px;
  border-top: 1px solid var(--light);
  font-size: 12px;
  line-height: 18px;
`;

const ColumnHeader = styled.div`
  display: flex;
  flex: none;
  align-items: center;
  gap: 18px;
  height: 15px;
  padding-left: 5px;
  border-top: 1px solid var(--light);
  border-bottom: 1px solid #8a877a;
`;

const Tree = styled.ul`
  flex: 1;
  min-height: 0;
  margin: 0;
  padding: 0;
  overflow: hidden;
  background: #fff;
  list-style: none;
  line-height: 16px;
  white-space: nowrap;
`;

const TreeRoot = styled.div`
  display: flex;
  align-items: center;
  gap: 4px;
  height: 16px;
  padding-left: 5px;
`;

const Expander = styled.button`
  display: flex;
  align-items: center;
  justify-content: center;
  width: 9px;
  height: 9px;
  padding: 0;
  border: 1px solid #8a877a;
  background: #fff;

  &::after {
    content: "";
    width: 5px;
    height: 1px;
    background: #000;
  }
`;

const Branch = styled.ul`
  margin: 0 0 0 28px;
  padding: 0;
  border-left: 1px dotted #aaa;
  list-style: none;
`;

const TreeItem = styled.li`
  display: flex;
  align-items: center;
  height: 16px;

  &::before {
    content: "";
    flex: none;
    width: 9px;
    margin-right: 3px;
    border-top: 1px dotted #aaa;
  }
`;

const TreeLabel = styled.label`
  display: flex;
  flex: none;
  align-items: center;
  gap: 2px;
`;

const Check = styled.input`
  appearance: none;
  position: relative;
  flex: none;
  width: 11px;
  height: 11px;
  margin: 0;
  border: 1px solid #000;
  background: #fff;

  &:checked::after {
    content: "";
    position: absolute;
    inset: -1px -3px 0 -1px;
    background: #22b83a;
    clip-path: polygon(0 45%, 18% 35%, 38% 62%, 90% 0, 100% 8%, 42% 100%, 30% 100%);
  }
`;

const ScrollBar = styled.div`
  display: flex;
  flex: none;
  height: 15px;
  background: #f4f3ec;
`;

const ScrollButton = styled.button`
  ${toolButton}
  width: ${(p) => p.$width || 15}px;
  margin: 0 1px;
  border: 1px solid #9cb4ea;
  border-radius: 2px;
  background: linear-gradient(#d2defd, #b9ccfa);
`;

const ScrollThumb = styled(ScrollButton)`
  margin-right: auto;
`;

const Splitter = styled.div`
  display: flex;
  flex: none;
  justify-content: center;
  height: 9px;

  &::before,
  &::after {
    content: "";
    flex: 1;
    height: 4px;
    margin: 3px 2px;
    border: solid var(--shadow);
    border-width: 1px 0;
  }
`;

const SplitterHandle = styled.span`
  width: 60px;
  height: 7px;
  margin-top: 1px;
  border: 1px solid var(--shadow);
  background: #fff;
`;

const Panels = styled.div`
  display: flex;
  flex: none;
  flex-direction: column;
  gap: 3px;
  padding: 4px 0 4px 6px;
  background: linear-gradient(#8aa5e6, #6683d6);
`;

const PanelButton = styled.button`
  height: 23px;
  padding: 0 7px;
  border: 0;
  border-radius: 3px 0 0 0;
  background: linear-gradient(90deg, #fff 35%, #c6d3f7);
  font: bold 12px/18px var(--font-ui);
  text-align: left;
  color: #215dc6;
`;

const features = [
  ["plane", "FIXED_DATUM_PLAN..."],
  ["axis", "FIXED_DATUM_AXIS..."],
  ["axis", "FIXED_DATUM_AXIS..."],
  ["sketch", "SKETCH \u201cSKETCH_0..."],
  ...[4, 6, 7, 8, 9].map((n) => ["extruded", `EXTRUDED (${n})`]),
  ["offset", "OFFSET (10)"],
  ...[11, 12, 14, 15].map((n) => ["chamfer", `CHAMFER (${n})`]),
  ...[16, 17, 18, 19, 20, 21, 22, 23, 24, 25].map((n) => ["hole", `SIMPLE_HOLE (${n})`]),
];

function PartNavigator() {
  return (
    <Navigator>
      <NavigatorTitle>
        <Icon name="navigator" />
        Part Navigator
      </NavigatorTitle>
      <ColumnHeader>
        Name
        <svg width="9" height="8" viewBox="0 0 9 8" aria-hidden="true">
          {stroke("M0 7.500L4.500 0", "#8a877a")}
          {stroke("M4.500 0L9 7.500H0", "#fff")}
        </svg>
      </ColumnHeader>
      <Tree>
        <li>
          <TreeRoot>
            <Expander aria-label="Collapse" />
            <Icon name="folder" />
            Model History
          </TreeRoot>
          <Branch>
            {features.map(([icon, name], idx) => (
              <TreeItem key={`feature ${idx}`}>
                <TreeLabel>
                  <Check type="checkbox" defaultChecked />
                  <Icon name={icon} />
                  {name}
                </TreeLabel>
              </TreeItem>
            ))}
          </Branch>
        </li>
      </Tree>
      <ScrollBar>
        <ScrollButton aria-label="Scroll left">
          <svg width="6" height="9" viewBox="0 0 6 9" aria-hidden="true">
            {stroke("M5 1L1.500 4.500 5 8", "#4d6185", 2)}
          </svg>
        </ScrollButton>
        <ScrollThumb $width={73} aria-label="Scroll position">
          <svg width="8" height="7" viewBox="0 0 8 7" aria-hidden="true">
            {stroke("M.500 0v7M2.500 0v7M4.500 0v7M6.500 0v7", "#8ca8ee")}
          </svg>
        </ScrollThumb>
        <ScrollButton $width={3} aria-label="Scroll right" />
      </ScrollBar>
      <Splitter>
        <SplitterHandle />
      </Splitter>
      <Panels>
        <PanelButton>Dependencies</PanelButton>
        <PanelButton>Details</PanelButton>
      </Panels>
    </Navigator>
  );
}

/* ---------- bottom bar ---------- */

const BottomBar = styled.footer`
  display: flex;
  flex: none;
  align-items: flex-start;
  height: 14px;
  overflow: hidden;
`;

function App() {
  return (
    <Window>
      <GlobalStyle />
      <TitleBar>
        <Icon name="app" />
        <Title>Unigraphics NX 2 - Sketcher - [FF030-08-40.prt (Modified) ]</Title>
        <MinimizeButton aria-label="Minimize" />
      </TitleBar>
      <MenuBar>
        <Icon name="app" />
        {menus.map(([before, key, after]) => (
          <MenuItem key={before + key + after}>
            {before}
            <u>{key}</u>
            {after}
          </MenuItem>
        ))}
      </MenuBar>
      <Toolbars>
        <ToolbarRow>
          <Toolbar $height={25}>
            <Grip />
            <Tools names={["flag"]} />
            <Combo label="Sketch name" value="SKETCH_000" />
            <Tools names={["sketchView", "orient", "reattach", "v", "update"]} />
          </Toolbar>
          <Toolbar $height={25} $offset={1}>
            <Grip />
            <Tools names={["save", "print", "|", "remove", "undo"]} />
          </Toolbar>
          <Toolbar $height={25} $offset={1}>
            <Grip />
            <Tools
              names={[
                "fit",
                "fitSelection",
                "zoomArea",
                "zoom",
                "rotate",
                "pan",
                "perspective",
                "|",
                "wire",
                "v",
                "shaded",
                "v",
                "noHide",
                "wirePurple",
                "v",
              ]}
            />
          </Toolbar>
        </ToolbarRow>
        <ToolbarRow>
          <Toolbar $height={27}>
            <Grip />
            <Tools
              names={[
                "constraintA",
                "constraintB",
                "gridGreen",
                "pointsTable",
                "pointsDark",
                "grid",
                "plus",
                "brush",
              ]}
            />
          </Toolbar>
        </ToolbarRow>
        <ToolbarRow>
          <Toolbar>
            <Grip />
            <Tools
              names={[
                "gears",
                "constraintB",
                "profile",
                "rectGrid",
                "redGrid",
                "cone",
                "dotted",
                "hBars",
                "vBars",
                "heart",
              ]}
            />
          </Toolbar>
          <Toolbar $offset={1}>
            <Grip />
            <ToolButton>
              <StdLabel>STD</StdLabel>
            </ToolButton>
            <Tools names={["magentaBox", "bolt"]} />
          </Toolbar>
          <Toolbar $offset={277}>
            <Grip />
            <Tools names={["openGray", "boxGray", "frameGray"]} />
          </Toolbar>
        </ToolbarRow>
      </Toolbars>
      <Workspace>
        <Palette>
          <PaletteTools tools={drawTools} />
          <PaletteTools tools={dimensionTools} />
        </Palette>
        <Viewport>
          <Sketch />
        </Viewport>
        <PartNavigator />
      </Workspace>
      <BottomBar>
        <Toolbar $height={24}>
          <Grip />
          <Tools names={["target", "snap", "snapPink", "stack", "|"]} pressed="snap" />
          <Combo label="Selection filter" value="Any" />
          <Tools names={["undoDark"]} />
        </Toolbar>
        <Toolbar $height={24} $offset={1}>
          <Grip />
          <Tools
            names={["grayLine", "grayTee", "grayArc", "grayPlus", "grayCircle", "grayRing", "grayPlus"]}
          />
        </Toolbar>
      </BottomBar>
    </Window>
  );
}

export default App;
